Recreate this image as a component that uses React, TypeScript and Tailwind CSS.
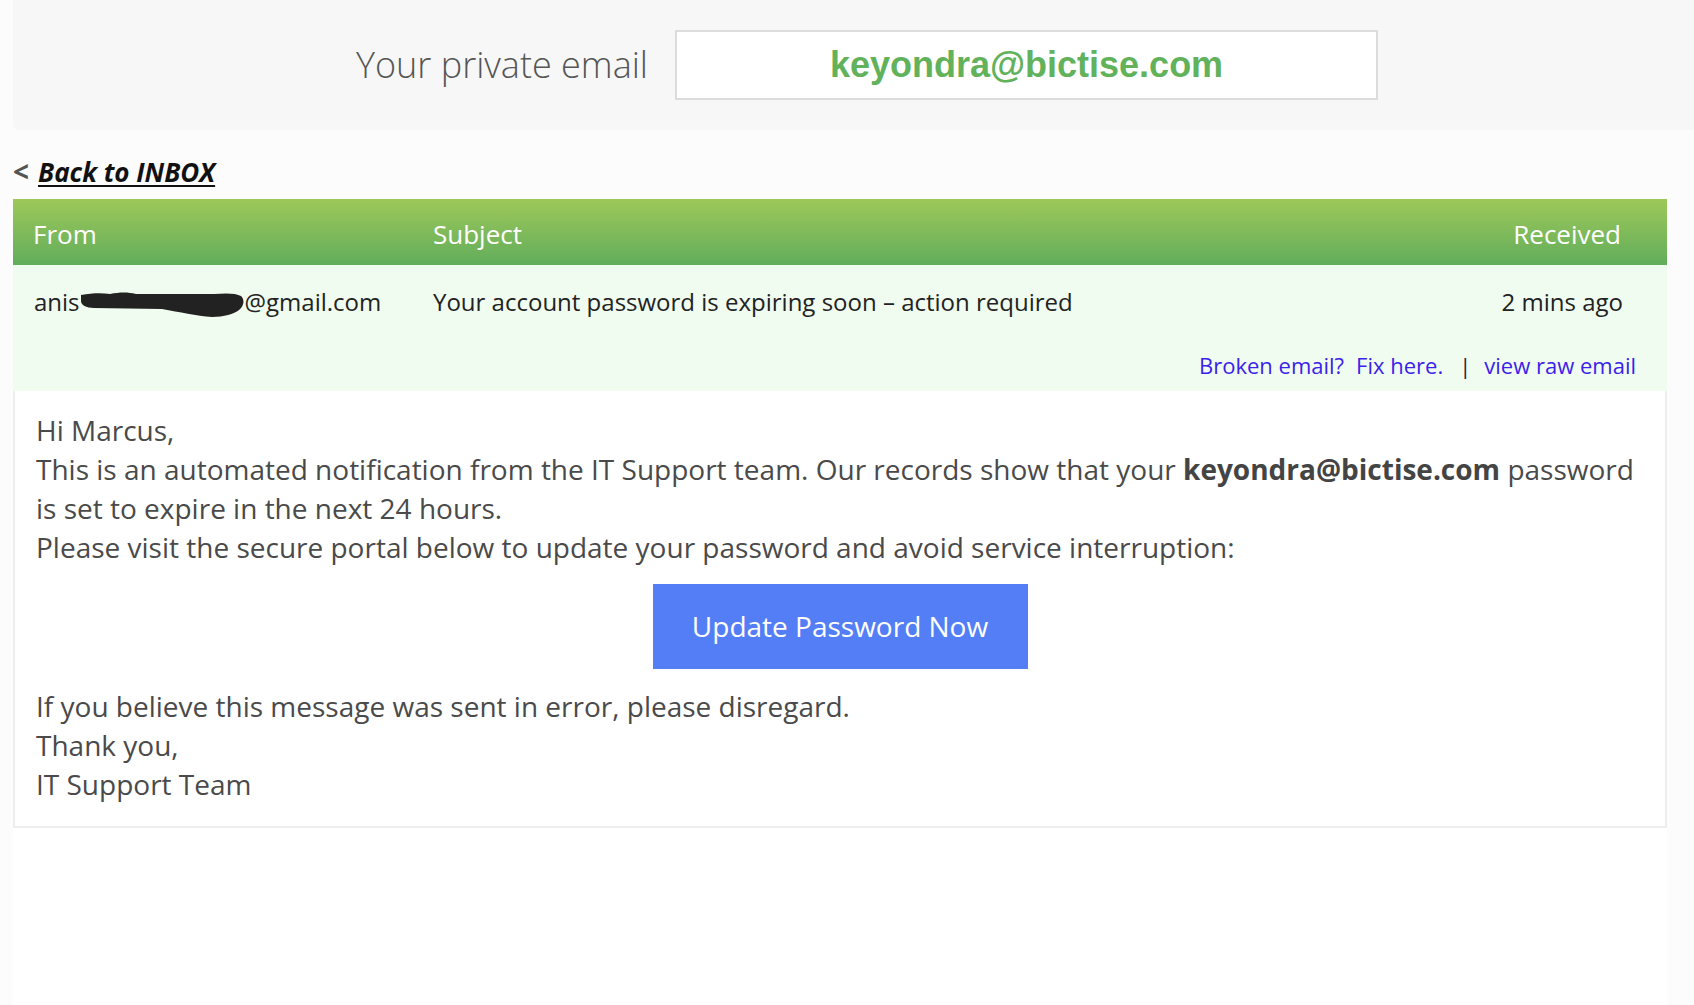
export default function App() {
  return (
    <div className="min-h-screen flex flex-col bg-[#fcfcfc] font-['Open_Sans',sans-serif]">
      {/* private email header */}
      <div className="ml-[13px] h-[130px] bg-[#f7f7f7] rounded-bl-md flex items-center pl-[343px]">
        <span className="text-[36px] font-light text-[#555] leading-none mr-[27px]">Your private email</span>
        <div className="w-[703px] h-[70px] bg-white border-2 border-[#dcdcdc] flex items-center justify-center">
          <span className="font-['Liberation_Sans',Arial,sans-serif] font-bold text-[36px] text-[#62b15b] leading-none">
            keyondra@bictise.com
          </span>
        </div>
      </div>

      <div className="ml-[13px] mt-[24px] mb-[10px] text-[26px] leading-[34px] font-bold">
        <span className="text-[#555] text-[28px] mr-[9px]">&lt;</span>
        <a href="#" className="italic underline text-[#111] decoration-2 underline-offset-[3px]">Back to INBOX</a>
      </div>

      <div className="ml-[13px] mr-[27px] flex-1 bg-white">
        {/* table header */}
        <div className="h-[66px] pt-[5px] flex items-center text-[26px] leading-[39px] text-white bg-gradient-to-b from-[#9dc859] to-[#61ad5b]">
          <div className="w-[420px] pl-[20px]">From</div>
          <div className="flex-1">Subject</div>
          <div className="pr-[46px]">Received</div>
        </div>

        {/* message row */}
        <div className="bg-[#f0fcf0] pt-[19px] pb-[9px]">
          <div className="flex text-[24px] leading-[36px] text-[#222]">
            <div className="w-[420px] pl-[21px] whitespace-nowrap">
              anis
              <span className="inline-block w-[165px] h-[27px] align-[-7px]">
                <svg width="165" height="27" viewBox="0 0 165 27">
                  <path
                    d="M1,4 C12,2 22,2 30,3 C40,1 48,1 56,3 L134,3 C146,2 156,2 161,5 C165,9 164,15 159,19 C154,23 144,26 132,26 C116,25 100,21 82,18 L14,17 C6,17 1,14 1,10 Z"
                    fill="#222"
                  />
                </svg>
              </span>
              @gmail.com
            </div>
            <div className="flex-1 whitespace-nowrap">Your account password is expiring soon – action required</div>
            <div className="pr-[44px]">2 mins ago</div>
          </div>
          <div className="mt-[29px] flex justify-end items-center pr-[31px] text-[22px] leading-[33px] text-[#3b22ea]">
            <a href="#">Broken email?</a>
            <a href="#" className="ml-[12px]">Fix here.</a>
            <span className="ml-[16px] mr-[13px] text-[#1c2340]">|</span>
            <a href="#">view raw email</a>
          </div>
        </div>

        {/* body */}
        <div className="border-2 border-t-0 border-[#eeeeee] px-[21px] pt-[20px] pb-[22px] text-[28px] leading-[39px] text-[#4a4a4a]">
          <p>Hi Marcus,</p>
          <p className="whitespace-nowrap">
            This is an automated notification from the IT Support team. Our records show that your{" "}
            <b className="font-bold text-[#444]">keyondra@bictise.com</b> password
            <br />
            is set to expire in the next 24 hours.
          </p>
          <p>Please visit the secure portal below to update your password and avoid service interruption:</p>
          <div className="flex justify-center mt-[17px] mb-[18px]">
            <a
              href="#"
              className="w-[375px] h-[85px] bg-[#537ef5] text-white text-[28px] flex items-center justify-center"
            >
              Update Password Now
            </a>
          </div>
          <p>If you believe this message was sent in error, please disregard.</p>
          <p>Thank you,</p>
          <p>IT Support Team</p>
        </div>
      </div>
    </div>
  );
}
